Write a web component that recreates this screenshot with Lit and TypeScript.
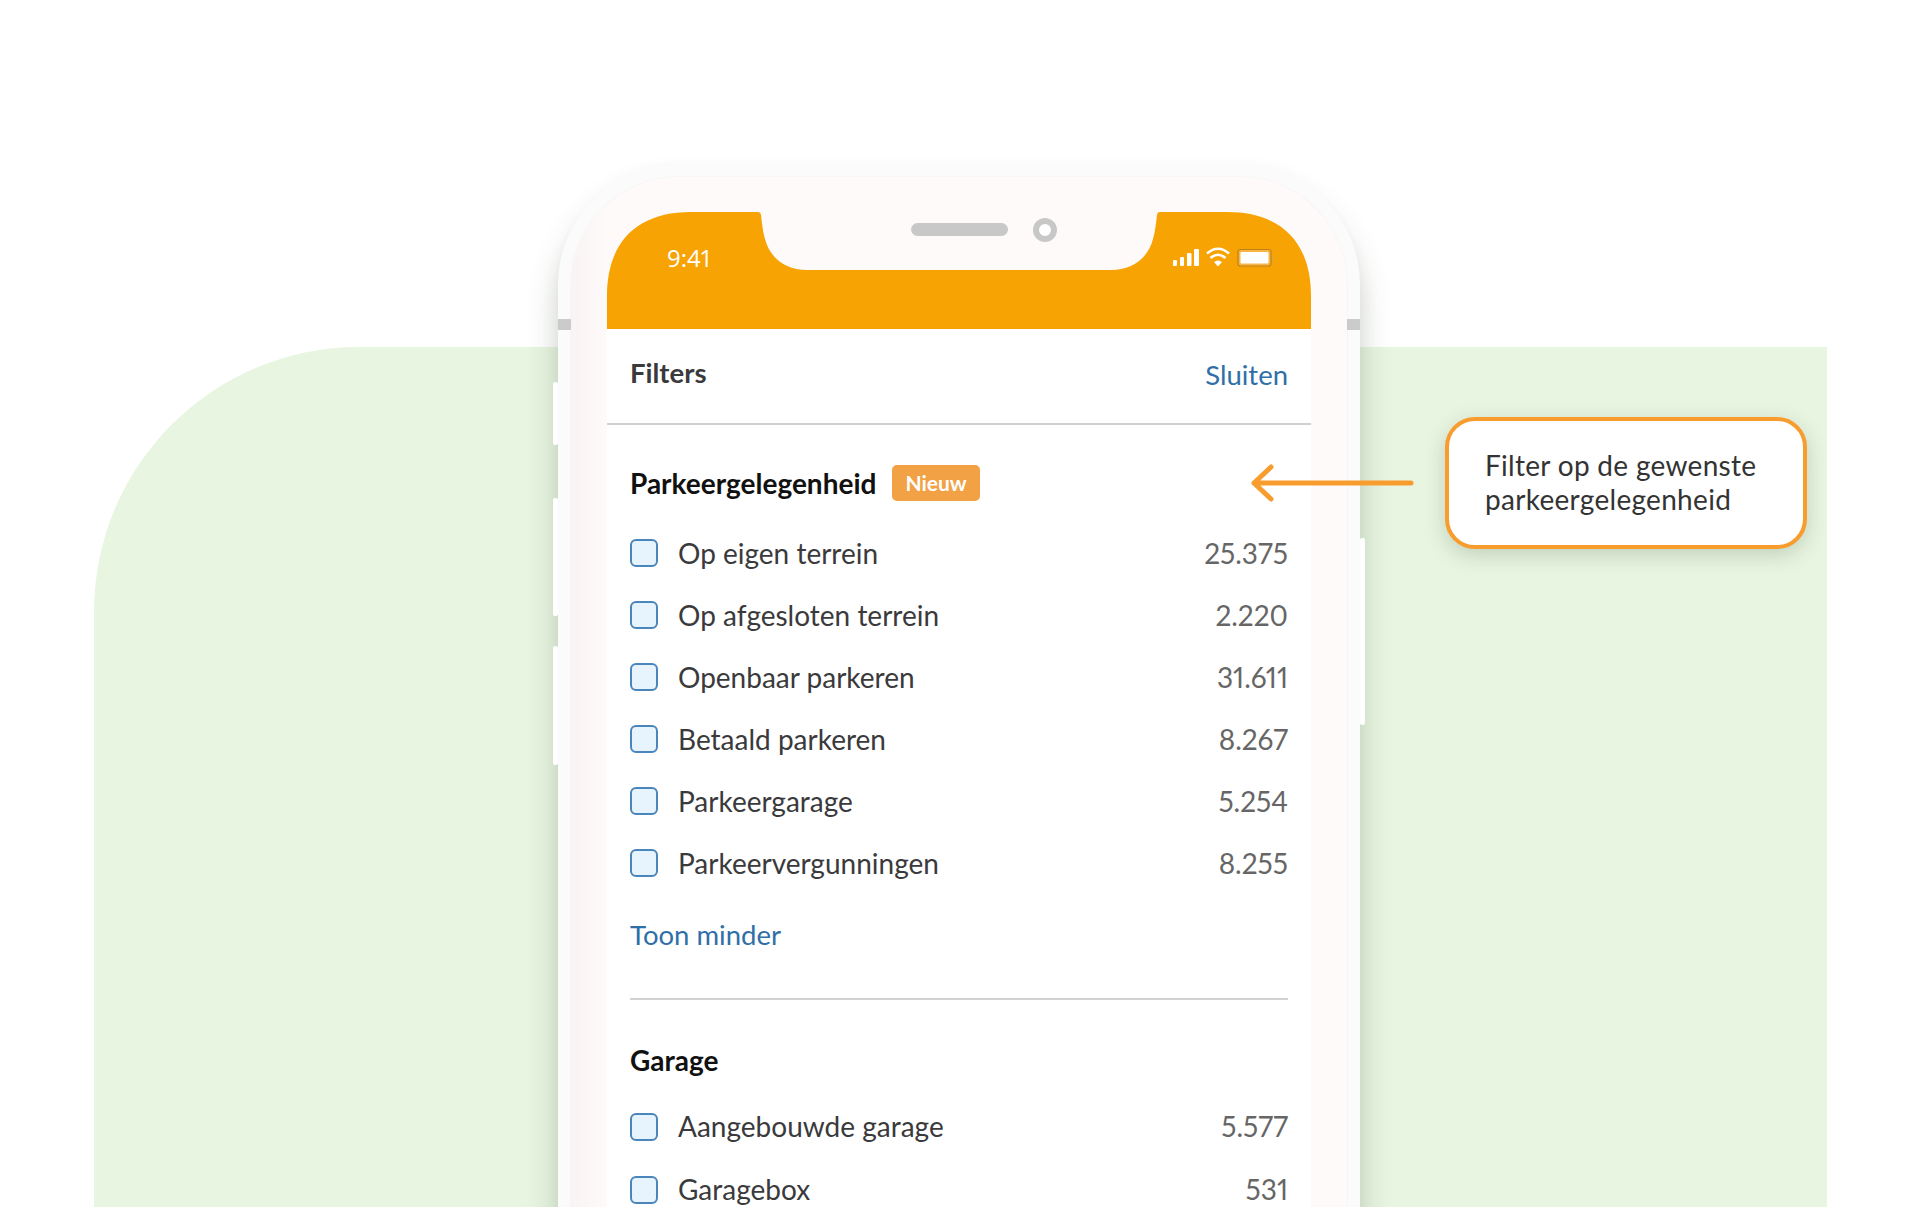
import { LitElement, css, html } from "lit";
import { customElement } from "lit/decorators.js";

const PARKING = [
  ["Op eigen terrein", "25.375"],
  ["Op afgesloten terrein", "2.220"],
  ["Openbaar parkeren", "31.611"],
  ["Betaald parkeren", "8.267"],
  ["Parkeergarage", "5.254"],
  ["Parkeervergunningen", "8.255"],
];

const GARAGE = [
  ["Aangebouwde garage", "5.577"],
  ["Garagebox", "531"],
];

@customElement("app-root")
export class AppRoot extends LitElement {
  static styles = css`
    :host {
      display: block;
      font-family: Lato, "Open Sans", sans-serif;
      font-variant-numeric: proportional-nums;
      color: #3a3a3c;
    }

    .stage {
      position: relative;
      display: grid;
      height: 1207px;
      overflow: hidden;
      background: #fff;
    }

    .backdrop {
      grid-area: 1 / 1;
      margin: 347px 93px 0 94px;
      background: #e8f5e1;
      border-top-left-radius: 265px;
    }

    .phone {
      grid-area: 1 / 1;
      position: relative;
      box-sizing: border-box;
      width: 802px;
      height: 1200px;
      margin: 163px 0 0 558px;
      padding: 14px 13px 0;
      background: #fbfbfb;
      border-radius: 122px 122px 0 0;
      box-shadow: 0 24px 30px rgba(50, 70, 40, 0.26), 0 0 10px rgba(0, 0, 0, 0.015);
    }

    .side {
      position: absolute;
      background: #fff;
      border-radius: 2px;
    }

    .side.a {
      left: -5px;
      top: 219px;
      width: 5px;
      height: 63px;
    }

    .side.b {
      left: -5px;
      top: 335px;
      width: 5px;
      height: 118px;
    }

    .side.c {
      left: -5px;
      top: 483px;
      width: 5px;
      height: 119px;
    }

    .side.d {
      right: -5px;
      top: 375px;
      width: 5px;
      height: 187px;
    }

    .band {
      position: absolute;
      top: 156px;
      width: 13px;
      height: 11px;
      background: #cbcbcb;
    }

    .band.l {
      left: 0;
    }

    .band.r {
      right: 0;
    }

    .bezel {
      box-sizing: border-box;
      height: 100%;
      padding: 35px 36px 0;
      background: linear-gradient(90deg, #f9f4f3, #fdfaf9 36px, #fdfaf9);
      border-radius: 108px 108px 0 0;
      box-shadow: 0 0 0 1px #f6f6f6;
    }

    .status {
      position: relative;
      box-sizing: border-box;
      height: 117px;
      padding: 31px 0 0 60px;
    }

    .status svg {
      position: absolute;
      inset: 0;
      overflow: visible;
    }

    .time {
      position: relative;
      font-family: "Open Sans", sans-serif;
      font-size: 24px;
      font-weight: 500;
      line-height: 30px;
      color: #fff;
    }

    .sheet {
      background: #fff;
    }

    .top {
      display: flex;
      align-items: center;
      justify-content: space-between;
      box-sizing: border-box;
      height: 96px;
      padding: 0 23px 7px;
      border-bottom: 2px solid #cfcfcf;
    }

    .top b {
      font-size: 27.500px;
      font-weight: 700;
      color: #3a3a3c;
    }

    .link {
      font-size: 27.500px;
      color: #2f6fa8;
    }

    .top .link {
      padding-top: 3px;
    }

    .filters {
      padding: 40px 23px 0;
    }

    .heading {
      display: flex;
      align-items: center;
      gap: 16px;
      height: 36px;
      margin-bottom: 21px;
      font-size: 28px;
      font-weight: 700;
      color: #111;
    }

    .heading.second {
      margin-top: 42px;
      margin-bottom: 17px;
    }

    .badge {
      padding: 0 13px;
      font-size: 21px;
      line-height: 36px;
      color: #fff;
      background: #f2a144;
      border-radius: 5px;
    }

    .row {
      display: flex;
      align-items: center;
      height: 62px;
      font-size: 28px;
      line-height: 60px;
    }

    .row.tall {
      height: 63px;
    }

    .check {
      flex: none;
      box-sizing: border-box;
      width: 28px;
      height: 28px;
      margin-right: 20px;
      background: #e7f3fd;
      border: 2px solid #4a86bb;
      border-radius: 6px;
    }

    .row span {
      flex: 1;
      padding-bottom: 1px;
    }

    .row em {
      padding-bottom: 1px;
      font-style: normal;
      color: #666;
    }

    .more {
      display: block;
      margin-top: 24px;
      line-height: 34px;
    }

    hr {
      height: 2px;
      margin: 46px 0 0;
      background: #d2d2d2;
      border: 0;
    }

    .arrow {
      position: absolute;
      left: 1248px;
      top: 462px;
    }

    .note {
      position: absolute;
      left: 1445px;
      top: 417px;
      box-sizing: border-box;
      width: 362px;
      height: 132px;
      padding: 27px 0 0 36px;
      font-size: 28px;
      letter-spacing: 0.300px;
      line-height: 34px;
      color: #333;
      background: #fff;
      border: 4px solid #f89c2e;
      border-radius: 30px;
      box-shadow: 0 6px 20px rgba(60, 80, 50, 0.22);
    }
  `;

  private renderRow(row: string[], tall = false) {
    return html`<div class="row ${tall ? "tall" : ""}">
      <i class="check"></i><span>${row[0]}</span><em>${row[1]}</em>
    </div>`;
  }

  render() {
    return html`<div class="stage">
      <div class="backdrop"></div>
      <div class="phone">
        <i class="side a"></i><i class="side b"></i><i class="side c"></i><i class="side d"></i>
        <i class="band l"></i><i class="band r"></i>
        <div class="bezel">
          <div class="status">
            <svg width="704" height="117" viewBox="0 0 704 117">
              <path
                fill="#f8a304"
                d="M0 117V84C0 30 30 0 84 0H151Q153.500 0 154 3C155 12 156 20 158 27C163 47 180 58 200 58H504C524 58 541 47 546 27C548 20 549 12 550 3Q550.500 0 553 0H620C674 0 704 30 704 84V117Z"
              />
              <rect x="304" y="11" width="97" height="13" rx="6.500" fill="#c9c8c8" />
              <circle cx="438" cy="18" r="9" fill="#fff" stroke="#c9c8c8" stroke-width="6" />
              <g fill="#fff">
                <rect x="566" y="48" width="4" height="6" rx="1" />
                <rect x="573" y="45" width="4" height="9" rx="1" />
                <rect x="580" y="41" width="4.500" height="13" rx="1" />
                <rect x="587" y="37" width="5" height="17" rx="1" />
                <path d="M611 54.500L607 50Q611 47 615 50Z" />
              </g>
              <path
                d="M603.500 46Q611 39.500 618.500 46M600 41.500Q611 32 622 41.500"
                fill="none"
                stroke="#fff"
                stroke-width="2.600"
              />
              <rect x="631" y="37.500" width="33" height="16.500" rx="2.500" fill="#f9b544" stroke="#bd8218" stroke-width="1.200" />
              <rect x="633.500" y="40" width="28" height="11.500" rx="1" fill="#fff" />
              <path d="M665.500 43V48" stroke="#d9a650" stroke-width="1" />
            </svg>
            <span class="time">9:41</span>
          </div>
          <div class="sheet">
            <div class="top"><b>Filters</b><span class="link">Sluiten</span></div>
            <div class="filters">
              <div class="heading">Parkeergelegenheid <span class="badge">Nieuw</span></div>
              ${PARKING.map((r) => this.renderRow(r))}
              <span class="link more">Toon minder</span>
              <hr />
              <div class="heading second">Garage</div>
              ${GARAGE.map((r) => this.renderRow(r, true))}
            </div>
          </div>
        </div>
      </div>
      <svg class="arrow" width="170" height="42" viewBox="0 0 170 42">
        <path
          d="M163 21H6M23 5L6 21L23 37"
          fill="none"
          stroke="#f89c2e"
          stroke-width="5"
          stroke-linecap="round"
          stroke-linejoin="round"
        />
      </svg>
      <div class="note">Filter op de gewenste<br />parkeergelegenheid</div>
    </div>`;
  }
}

declare global {
  interface HTMLElementTagNameMap {
    "app-root": AppRoot;
  }
}
